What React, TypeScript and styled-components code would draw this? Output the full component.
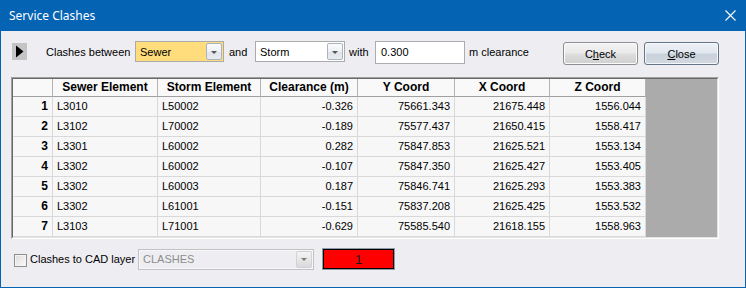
import React from "react";
import styled, { createGlobalStyle } from "styled-components";

const GlobalStyle = createGlobalStyle`
  html, body {
    margin: 0;
    padding: 0;
    background: #eeeef2;
  }
  * {
    box-sizing: border-box;
  }
`;

const rows = [
  { n: 1, sewer: "L3010", storm: "L50002", clr: "-0.326", y: "75661.343", x: "21675.448", z: "1556.044" },
  { n: 2, sewer: "L3102", storm: "L70002", clr: "-0.189", y: "75577.437", x: "21650.415", z: "1558.417" },
  { n: 3, sewer: "L3301", storm: "L60002", clr: "0.282", y: "75847.853", x: "21625.521", z: "1553.134" },
  { n: 4, sewer: "L3302", storm: "L60002", clr: "-0.107", y: "75847.350", x: "21625.427", z: "1553.405" },
  { n: 5, sewer: "L3302", storm: "L60003", clr: "0.187", y: "75846.741", x: "21625.293", z: "1553.383" },
  { n: 6, sewer: "L3302", storm: "L61001", clr: "-0.151", y: "75837.208", x: "21625.425", z: "1553.532" },
  { n: 7, sewer: "L3103", storm: "L71001", clr: "-0.629", y: "75585.540", x: "21618.155", z: "1558.963" },
];

const blue = "#0563b4";

const Frame = styled.div`
  width: 746px;
  height: 288px;
  border: 1px solid ${blue};
  border-top: none;
  background: #eeeef2;
  display: flex;
  flex-direction: column;
  font-family: "Liberation Sans", Arial, sans-serif;
  font-size: 11px;
  color: #000;
`;

const TitleBar = styled.div`
  height: 31px;
  flex: none;
  background: ${blue};
  display: flex;
  align-items: center;
  justify-content: space-between;
  padding: 0 9px 0 8px;
`;

const Title = styled.span`
  font-family: "Noto Sans", "Open Sans", sans-serif;
  font-size: 12px;
  color: #fff;
  margin-top: -1px;
`;

const Body = styled.div`
  flex: 1;
  display: flex;
  flex-direction: column;
  padding: 10px 26px 0 10px;
`;

const Toolbar = styled.div`
  height: 24px;
  display: flex;
  align-items: flex-start;
`;

const PlayBox = styled.div`
  width: 15px;
  height: 17px;
  margin: 2px 0 0 1px;
  background: #c4c4c4;
  display: flex;
  align-items: center;
  justify-content: center;
`;

const Label = styled.span<{ $w?: number; $pl?: number }>`
  display: inline-block;
  width: ${(p) => (p.$w ? `${p.$w}px` : "auto")};
  padding-left: ${(p) => p.$pl ?? 0}px;
  line-height: 22px;
  white-space: nowrap;
`;

const Combo = styled.div<{ $w: number; $bg: string; $disabled?: boolean }>`
  width: ${(p) => p.$w}px;
  height: 21px;
  border: 1px solid ${(p) => (p.$disabled ? "#c2c2c2" : "#ababab")};
  background: ${(p) => p.$bg};
  box-shadow: ${(p) => (p.$disabled ? "inset 0 0 0 1px #f7f7f9" : "none")};
  display: flex;
  align-items: center;
  justify-content: space-between;
  padding: 0 1px 0 4px;
  color: ${(p) => (p.$disabled ? "#8c8c8c" : "#000")};
`;

const DropBtn = styled.div<{ $disabled?: boolean }>`
  width: 16px;
  height: 17px;
  border: 1px solid ${(p) => (p.$disabled ? "#cfd3d8" : "#a9b4c0")};
  border-radius: 2px;
  background: ${(p) =>
    p.$disabled
      ? "linear-gradient(#f4f4f4, #d9d9d9)"
      : "linear-gradient(#fbfbfc 0%, #eef0f3 50%, #dfe3e8 51%, #e9ecf0 100%)"};
  display: flex;
  align-items: center;
  justify-content: center;
`;

const Arrow = styled.div<{ $disabled?: boolean }>`
  width: 0;
  height: 0;
  border-left: 3px solid transparent;
  border-right: 3px solid transparent;
  border-top: 3px solid ${(p) => (p.$disabled ? "#7a7a7a" : "#555")};
  margin-top: 1px;
`;

const TextInput = styled.div`
  width: 90px;
  height: 23px;
  border: 1px solid #abadb3;
  background: #fff;
  padding-left: 5px;
  line-height: 21px;
`;

const Buttons = styled.div`
  margin-left: auto;
  margin-top: 1px;
  display: flex;
  gap: 6px;
`;

const Button = styled.div<{ $default?: boolean }>`
  width: 75px;
  height: 23px;
  border: 1px solid ${(p) => (p.$default ? "#667586" : "#8e8f8f")};
  border-radius: 3px;
  background: ${(p) =>
    p.$default
      ? "linear-gradient(#eef2f7 0%, #e2e8ef 45%, #c9d1db 55%, #d3d9e1 100%)"
      : "linear-gradient(#f3f3f3 0%, #ebebeb 45%, #dddddd 55%, #cfcfcf 100%)"};
  box-shadow: inset 0 0 0 1px ${(p) => (p.$default ? "#f4f7fb" : "#fbfbfb")};
  display: flex;
  align-items: center;
  justify-content: center;
  u {
    text-decoration: underline;
    text-underline-offset: 1px;
  }
`;

const GridOuter = styled.div`
  margin-top: 12px;
  height: 162px;
  border: 1px solid;
  border-color: #a0a0a0 #ffffff #ffffff #a0a0a0;
`;

const GridInner = styled.div`
  height: 100%;
  border: 1px solid;
  border-color: #696969 #e3e3e3 #e3e3e3 #696969;
  display: flex;
`;

const Table = styled.div`
  display: grid;
  grid-template-columns: 40px 105px 103px 97px 97px 95px 96px;
  grid-template-rows: 18px repeat(7, 20px);
`;

const Filler = styled.div`
  flex: 1;
  background: #ababab;
`;

const HeadCell = styled.div`
  background: #f9f9f9;
  border-right: 1px solid #b4b4b4;
  border-bottom: 1px solid #a0a0a0;
  font-weight: bold;
  font-size: 12px;
  text-align: center;
  line-height: 17px;
  white-space: nowrap;
`;

const Cell = styled.div<{ $align: "left" | "right"; $bold?: boolean }>`
  background: #f7f7f7;
  border-right: 1px solid #d9d9d9;
  border-bottom: 1px solid #d9d9d9;
  text-align: ${(p) => p.$align};
  font-weight: ${(p) => (p.$bold ? "bold" : "normal")};
  font-size: ${(p) => (p.$bold ? "12px" : "11px")};
  padding: 0 ${(p) => (p.$align === "right" ? 4 : 0)}px 0 ${(p) => (p.$align === "left" ? 4 : 0)}px;
  line-height: 19px;
  white-space: nowrap;
`;

const BottomRow = styled.div`
  margin-top: 9px;
  height: 22px;
  display: flex;
  align-items: center;
`;

const CheckBox = styled.div`
  width: 13px;
  height: 13px;
  margin: 2px 3px 0 3px;
  border: 1px solid #8f8f8f;
  background: linear-gradient(135deg, #dcdcdc, #fbfbfb);
  box-shadow: inset 0 0 0 1px #f4f4f4;
`;

const ColorBox = styled.div`
  margin-left: 8px;
  width: 73px;
  height: 22px;
  border: 1px solid #8d9aa8;
  display: flex;
`;

const ColorFill = styled.div`
  flex: 1;
  border: 1px solid #000;
  background: #ff0000;
  display: flex;
  align-items: center;
  justify-content: center;
  font-size: 13px;
  color: #1a1a1a;
`;

export default function App() {
  return (
    <>
      <GlobalStyle />
      <Frame>
        <TitleBar>
          <Title>Service Clashes</Title>
          <svg width="11" height="11" viewBox="0 0 11 11">
            <path d="M0.5 0.5 L10.5 10.5 M10.5 0.5 L0.5 10.5" stroke="#fff" strokeWidth="1.1" />
          </svg>
        </TitleBar>
        <Body>
          <Toolbar>
            <PlayBox>
              <svg width="9" height="13" viewBox="0 0 9 13">
                <path d="M1 0.5 L8.5 6.5 L1 12.5 Z" fill="#000" />
              </svg>
            </PlayBox>
            <Label $w={108} $pl={19}>Clashes between</Label>
            <Combo $w={89} $bg="#ffdc7c">
              Sewer
              <DropBtn>
                <Arrow />
              </DropBtn>
            </Combo>
            <Label $w={31} $pl={5}>and</Label>
            <Combo $w={90} $bg="#fff">
              Storm
              <DropBtn>
                <Arrow />
              </DropBtn>
            </Combo>
            <Label $w={30} $pl={4}>with</Label>
            <TextInput>0.300</TextInput>
            <Label $pl={4}>m clearance</Label>
            <Buttons>
              <Button>
                <span>
                  C<u>h</u>eck
                </span>
              </Button>
              <Button $default>
                <span>
                  <u>C</u>lose
                </span>
              </Button>
            </Buttons>
          </Toolbar>

          <GridOuter>
            <GridInner>
              <Table>
                <HeadCell />
                <HeadCell>Sewer Element</HeadCell>
                <HeadCell>Storm Element</HeadCell>
                <HeadCell>Clearance (m)</HeadCell>
                <HeadCell>Y Coord</HeadCell>
                <HeadCell>X Coord</HeadCell>
                <HeadCell>Z Coord</HeadCell>
                {rows.map((r) => (
                  <React.Fragment key={r.n}>
                    <Cell $align="right" $bold>
                      {r.n}
                    </Cell>
                    <Cell $align="left">{r.sewer}</Cell>
                    <Cell $align="left">{r.storm}</Cell>
                    <Cell $align="right">{r.clr}</Cell>
                    <Cell $align="right">{r.y}</Cell>
                    <Cell $align="right">{r.x}</Cell>
                    <Cell $align="right">{r.z}</Cell>
                  </React.Fragment>
                ))}
              </Table>
              <Filler />
            </GridInner>
          </GridOuter>

          <BottomRow>
            <CheckBox />
            <Label $w={108}>Clashes to CAD layer</Label>
            <Combo $w={176} $bg="#eeeef2" $disabled>
              CLASHES
              <DropBtn $disabled>
                <Arrow $disabled />
              </DropBtn>
            </Combo>
            <ColorBox>
              <ColorFill>1</ColorFill>
            </ColorBox>
          </BottomRow>
        </Body>
      </Frame>
    </>
  );
}
